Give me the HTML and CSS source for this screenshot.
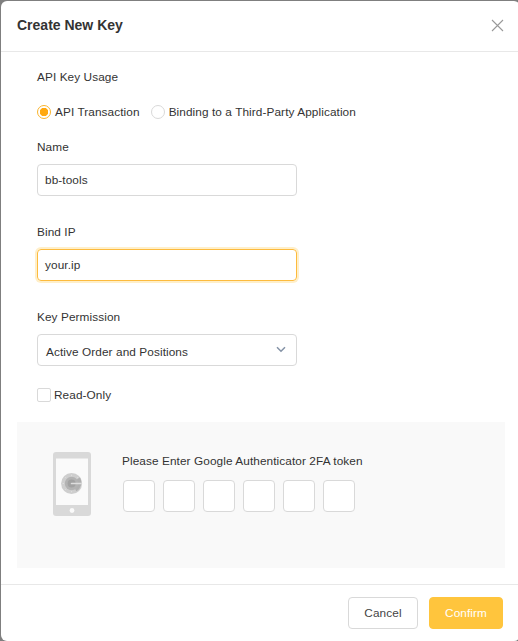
FILE: index.html
```html
<!DOCTYPE html>
<html lang="en">
<head>
<meta charset="utf-8">
<title>Create New Key</title>
<link rel="stylesheet" href="styles.css">
</head>
<body>
<div class="modal">
  <header class="modal-header">
    <h1 class="title">Create New Key</h1>
    <svg class="close" viewBox="0 0 13 13"><path d="M1 1 12 12M12 1 1 12"/></svg>
  </header>
  <main class="modal-body">
    <form class="form">
      <div class="label">API Key Usage</div>
      <div class="radios">
        <label class="radio"><span class="dot checked"></span><span>API Transaction</span></label>
        <label class="radio"><span class="dot"></span><span>Binding to a Third-Party Application</span></label>
      </div>
      <div class="label">Name</div>
      <div class="input">bb-tools</div>
      <div class="label">Bind IP</div>
      <div class="input focused">your.ip</div>
      <div class="label">Key Permission</div>
      <div class="input select"><span>Active Order and Positions</span>
        <svg class="chevron" viewBox="0 0 10 7"><path d="M1 1.2 5 5.2 9 1.2"/></svg>
      </div>
      <label class="readonly"><span class="box"></span><span>Read-Only</span></label>
    </form>
    <section class="twofa">
      <svg class="phone" viewBox="0 0 38 64">
        <rect width="38" height="64" rx="3" fill="#d9d9d9"/>
        <path d="M3 6.5h32V53H3z" fill="#fafafa"/>
        <circle cx="19" cy="58.5" r="2.4" fill="#fafafa"/>
        <circle cx="18.6" cy="31.5" r="10.5" fill="#cecece"/>
        <path d="M18.600 31.500 27 25.200a10.500 10.500 0 0 1-3.500 14.100z" fill="#b0b0b0"/>
        <circle cx="18.600" cy="31.500" r="6.800" fill="#b3b3b3"/>
        <circle cx="18.600" cy="31.500" r="4" fill="#a2a2a2"/>
        <path d="M18.600 31.500h9.400" stroke="#dedede" stroke-width="1.700" stroke-linecap="round"/>
        <path d="M10 31.500h.8M12.500 25.400l.5.500M12.500 37.600l.5-.5M18.600 23v.8M18.600 39.200v.8M24.700 25.400l-.5.500" stroke="#dedede" stroke-width="1" stroke-linecap="round"/>
      </svg>
      <div class="token">
        <div>Please Enter Google Authenticator 2FA token</div>
        <div class="cells"><span class="cell"></span><span class="cell"></span><span class="cell"></span><span class="cell"></span><span class="cell"></span><span class="cell"></span></div>
      </div>
    </section>
  </main>
  <footer class="modal-footer">
    <button class="btn cancel">Cancel</button>
    <button class="btn confirm">Confirm</button>
  </footer>
</div>
</body>
</html>
```
FILE: styles.css
```css
* { box-sizing: border-box; }
body {
  margin: 0;
  height: 641px;
  overflow: hidden;
  padding: 1px 0 0 1px;
  background: #7f7f7f;
  color: #333;
  font: 11.8px/18px "Liberation Sans", Arial, sans-serif;
  letter-spacing: 0.09px;
}
.modal {
  width: 519px;
  height: 640px;
  display: flex;
  flex-direction: column;
  background: #fff;
  border-radius: 6px;
}
.modal-header {
  height: 51px;
  flex: none;
  display: flex;
  align-items: center;
  justify-content: space-between;
  padding: 0 16px 2px;
  border-bottom: 1px solid #e8e8e8;
}
.title { margin: 0; font-size: 14px; line-height: 22px; font-weight: bold; letter-spacing: 0; }
.close { width: 13px; height: 13px; fill: none; stroke: #999; stroke-width: 1.1; }
.modal-body { flex: 1; padding: 16px; }
.form { width: 280px; margin-left: 20px; }
.label { height: 18px; }
.radios { display: flex; gap: 11px; margin: 17px 0; white-space: nowrap; }
.radio { display: flex; align-items: center; gap: 4px; height: 18px; }
.radio:first-child { width: 103px; }
.dot {
  width: 14px;
  height: 14px;
  flex: none;
  border: 1px solid #d9d9d9;
  border-radius: 50%;
}
.dot.checked { border-color: #f9b42d; background: radial-gradient(circle, #ffa80f 4px, #fff 4.500px); }
.input {
  width: 260px;
  height: 32px;
  margin: 8px 0 27px;
  padding: 0 7px;
  border: 1px solid #d9d9d9;
  border-radius: 4px;
  line-height: 31px;
}
.input.focused { border-color: #fdbb3d; box-shadow: 0 0 0 2px #ffefc9; }
.input.select {
  display: flex;
  justify-content: space-between;
  margin-bottom: 20px;
  padding: 2px 10px 0 8px;
}
.chevron { width: 10px; height: 7px; margin-top: 9px; fill: none; stroke: #8492a6; stroke-width: 1.500; }
.readonly { display: flex; align-items: center; gap: 3px; height: 18px; }
.box { width: 14px; height: 14px; border: 1px solid #d9d9d9; border-radius: 2px; }
.twofa {
  display: flex;
  width: 488px;
  height: 146px;
  margin-top: 18px;
  padding: 30px 36px;
  gap: 31px;
  background: #f9f9f9;
}
.phone { width: 38px; height: 64px; flex: none; }
.cells { display: flex; gap: 8px; margin: 10px 0 0 1px; }
.cell { width: 32px; height: 32px; background: #fff; border: 1px solid #d9d9d9; border-radius: 4px; }
.modal-footer {
  height: 57px;
  flex: none;
  display: flex;
  gap: 11px;
  justify-content: flex-end;
  padding: 12px 17px 0;
  border-top: 1px solid #e8e8e8;
}
.btn {
  height: 32px;
  padding: 0;
  border: 1px solid #d9d9d9;
  border-radius: 4px;
  background: #fff;
  color: #444;
  font: inherit;
  letter-spacing: inherit;
}
.cancel { width: 70px; }
.confirm { width: 74px; border-color: #ffc53d; background: #ffc53d; color: #fff; }
```
